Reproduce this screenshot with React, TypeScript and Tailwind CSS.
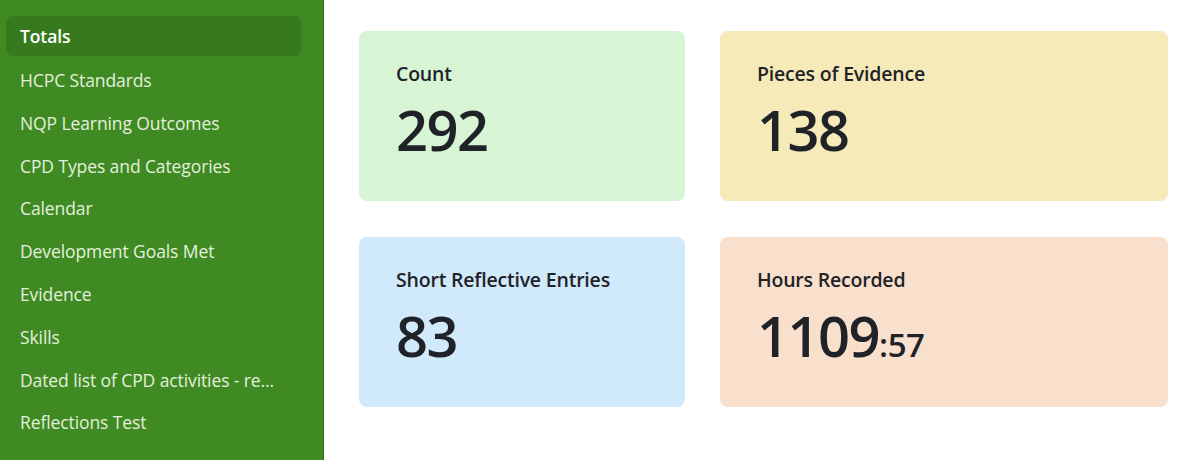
import React from 'react';

const NAV_ITEMS = [
  'Totals',
  'HCPC Standards',
  'NQP Learning Outcomes',
  'CPD Types and Categories',
  'Calendar',
  'Development Goals Met',
  'Evidence',
  'Skills',
  'Dated list of CPD activities - re...',
  'Reflections Test',
];

const CARDS = [
  { label: 'Count', value: '292', bg: 'bg-[#d7f4d4]' },
  { label: 'Pieces of Evidence', value: '138', bg: 'bg-[#f7eab9]' },
  { label: 'Short Reflective Entries', value: '83', bg: 'bg-[#d0eafb]' },
  { label: 'Hours Recorded', value: '1109', minutes: '57', bg: 'bg-[#f8e0cc]' },
];

export default function App() {
  const active = 'Totals';

  return (
    <div className="flex h-[460px] w-[1200px] overflow-hidden bg-white font-['Open_Sans',sans-serif]">
      {/* Sidebar */}
      <aside className="flex w-[324px] shrink-0 flex-col border-r border-[#2f6e18] bg-[#3f8a22] pl-[6px] pr-[22px] pt-[16px]">
        {NAV_ITEMS.map(item => (
          <div
            key={item}
            className={`flex shrink-0 items-center whitespace-nowrap rounded-[7px] px-[14px] text-[17.5px] tracking-[-0.1px] ${
              item === active ? 'mb-[2.8px] h-[40px] bg-[#367a1d] font-semibold text-white' : 'h-[42.8px] text-[#e4f0de]'
            }`}
          >
            {item}
          </div>
        ))}
      </aside>

      {/* Main */}
      <main className="flex-1 pl-[35px] pt-[31px]">
        <div className="grid grid-cols-[326px_448px] gap-x-[35px] gap-y-[36px]">
          {CARDS.map(card => (
            <div key={card.label} className={`h-[170px] rounded-[8px] px-[37px] pt-[29px] text-[#1f2328] ${card.bg}`}>
              <div className="text-[19.5px] font-semibold leading-[28px] tracking-[-0.2px]">{card.label}</div>
              <div className="mt-[9px] flex items-baseline text-[56px] font-semibold leading-[64px] tracking-[-1.5px]">
                {card.value}
                {card.minutes && <span className="text-[33px] font-semibold tracking-[-0.5px]">:{card.minutes}</span>}
              </div>
            </div>
          ))}
        </div>
      </main>
    </div>
  );
}
